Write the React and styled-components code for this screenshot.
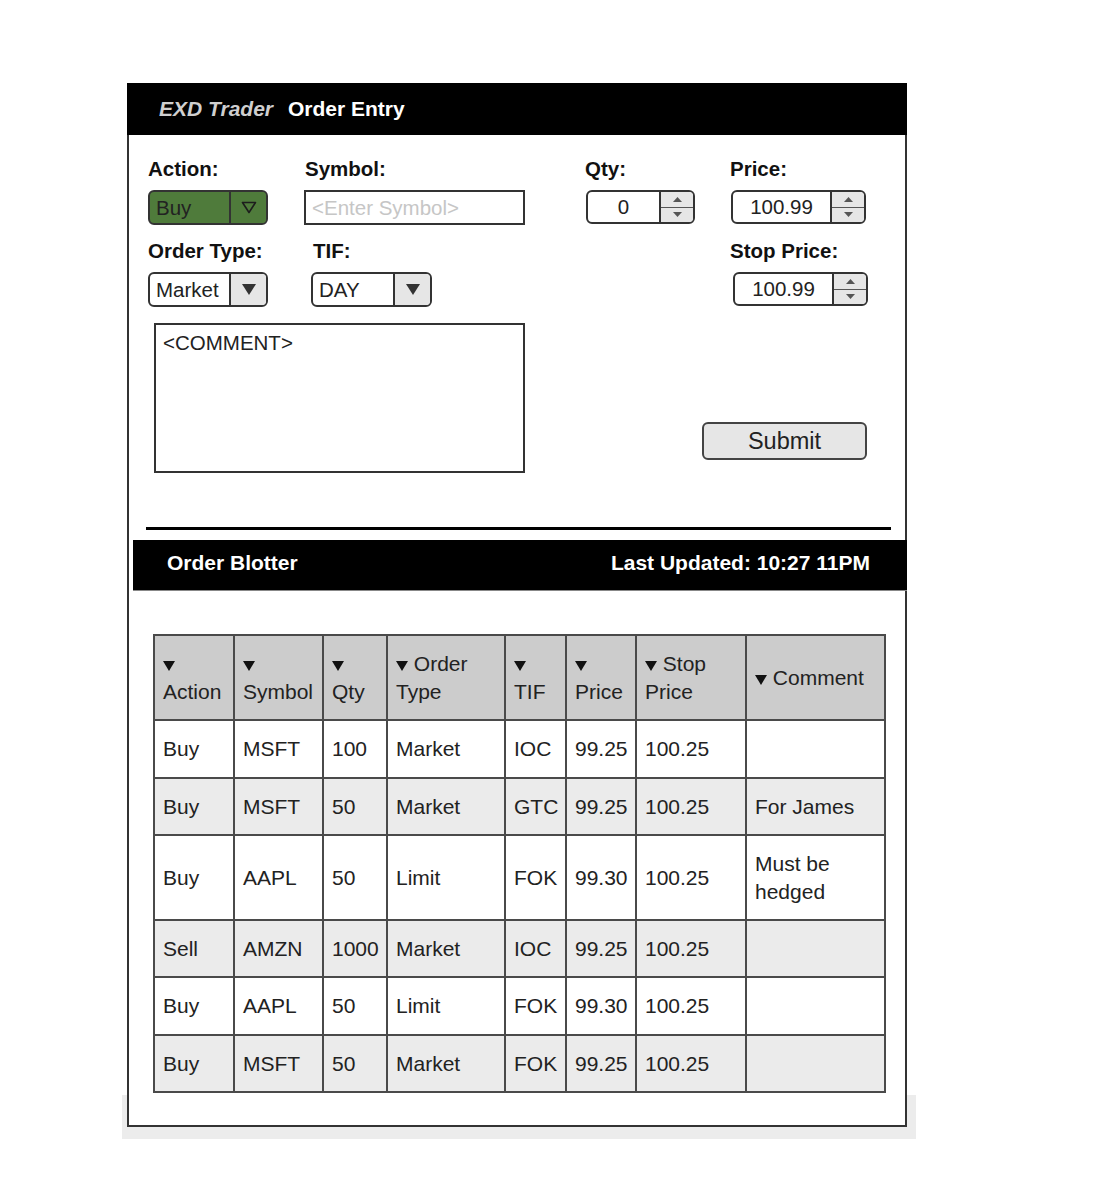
import React from "react";
import styled, { createGlobalStyle } from "styled-components";

const GlobalStyle = createGlobalStyle`
  * { box-sizing: border-box; }
  body {
    margin: 0;
    background: #fff;
    font-family: "Liberation Sans", Arial, sans-serif;
    color: #222;
  }
`;

const orders = [
  { action: "Buy", symbol: "MSFT", qty: "100", type: "Market", tif: "IOC", price: "99.25", stop: "100.25", comment: "" },
  { action: "Buy", symbol: "MSFT", qty: "50", type: "Market", tif: "GTC", price: "99.25", stop: "100.25", comment: "For James" },
  { action: "Buy", symbol: "AAPL", qty: "50", type: "Limit", tif: "FOK", price: "99.30", stop: "100.25", comment: "Must be hedged" },
  { action: "Sell", symbol: "AMZN", qty: "1000", type: "Market", tif: "IOC", price: "99.25", stop: "100.25", comment: "" },
  { action: "Buy", symbol: "AAPL", qty: "50", type: "Limit", tif: "FOK", price: "99.30", stop: "100.25", comment: "" },
  { action: "Buy", symbol: "MSFT", qty: "50", type: "Market", tif: "FOK", price: "99.25", stop: "100.25", comment: "" },
];

const columns = [
  { label: "Action", w: 80 },
  { label: "Symbol", w: 89 },
  { label: "Qty", w: 64 },
  { label: "Order Type", w: 118 },
  { label: "TIF", w: 61 },
  { label: "Price", w: 70 },
  { label: "Stop Price", w: 110 },
  { label: "Comment", w: 139 },
];

const SortArrow = () => (
  <svg width="12" height="10" viewBox="0 0 12 10">
    <path d="M0 0 L12 0 L6 10 Z" fill="#111" />
  </svg>
);

const OutlineArrow = () => (
  <svg width="16" height="13" viewBox="0 0 16 13">
    <path d="M1.5 1.5 L14.5 1.5 L8 11.5 Z" fill="none" stroke="#1d1d1d" strokeWidth="1.6" strokeLinejoin="round" />
  </svg>
);

const SolidArrow = () => (
  <svg width="16" height="13" viewBox="0 0 16 13">
    <path d="M1 1 L15 1 L8 12 Z" fill="#333" />
  </svg>
);

const SpinArrow = ({ up }) => (
  <svg width="9" height="5" viewBox="0 0 9 5">
    <path d={up ? "M0 5 L9 5 L4.5 0 Z" : "M0 0 L9 0 L4.5 5 Z"} fill="#555" />
  </svg>
);

const Select = ({ value, width, green }) => (
  <SelectBox $w={width} $green={green}>
    <SelectText>{value}</SelectText>
    <SelectArrow $green={green}>{green ? <OutlineArrow /> : <SolidArrow />}</SelectArrow>
  </SelectBox>
);

const Spinner = ({ value, width }) => (
  <SpinBox $w={width}>
    <SpinValue>{value}</SpinValue>
    <SpinButtons>
      <SpinBtn $top>
        <SpinArrow up />
      </SpinBtn>
      <SpinBtn>
        <SpinArrow />
      </SpinBtn>
    </SpinButtons>
  </SpinBox>
);

const App = () => {
  return (
    <Page>
      <GlobalStyle />
      <Panel>
        <Header>
          <Brand>EXD Trader</Brand>
          <span>Order Entry</span>
        </Header>

        <Form>
          <LeftCol>
            <FieldRow>
              <Field $w={156}>
                <Label>Action:</Label>
                <Select value="Buy" width={120} green />
              </Field>
              <Field>
                <Label $indent={1}>Symbol:</Label>
                <TextBox>&lt;Enter Symbol&gt;</TextBox>
              </Field>
            </FieldRow>
            <FieldRow $top={14}>
              <Field $w={163}>
                <Label>Order Type:</Label>
                <Select value="Market" width={120} />
              </Field>
              <Field>
                <Label $indent={2}>TIF:</Label>
                <Select value="DAY" width={121} />
              </Field>
            </FieldRow>
            <Comment>&lt;COMMENT&gt;</Comment>
          </LeftCol>

          <QtyCol>
            <Label $indent={-1}>Qty:</Label>
            <Spinner value="0" width={109} />
          </QtyCol>

          <RightCol>
            <Field $pl={28}>
              <Label>Price:</Label>
              <SpinWrap $ml={1}>
                <Spinner value="100.99" width={135} />
              </SpinWrap>
            </Field>
            <Field $pl={28} $top={15}>
              <Label>Stop Price:</Label>
              <SpinWrap $ml={3}>
                <Spinner value="100.99" width={135} />
              </SpinWrap>
            </Field>
            <SubmitButton>Submit</SubmitButton>
          </RightCol>
        </Form>

        <Divider />

        <BlotterBar>
          <span>Order Blotter</span>
          <span>Last Updated: 10:27 11PM</span>
        </BlotterBar>

        <Table>
          <thead>
            <tr>
              {columns.map((c) => (
                <Th key={c.label} $w={c.w}>
                  <SortArrow /> {c.label}
                </Th>
              ))}
            </tr>
          </thead>
          <tbody>
            {orders.map((o, i) => (
              <Tr key={i} $alt={i % 2 === 1}>
                <Td>{o.action}</Td>
                <Td>{o.symbol}</Td>
                <Td>{o.qty}</Td>
                <Td>{o.type}</Td>
                <Td>{o.tif}</Td>
                <Td>{o.price}</Td>
                <Td>{o.stop}</Td>
                <Td>{o.comment}</Td>
              </Tr>
            ))}
          </tbody>
        </Table>
      </Panel>
      <Band />
    </Page>
  );
};

const Page = styled.div`
  padding-top: 83px;
  padding-bottom: 58px;
`;

const Panel = styled.div`
  position: relative;
  z-index: 1;
  margin-left: 127px;
  width: 780px;
  background: #fff;
  border: 2px solid #333;
  border-top: none;
  padding-bottom: 32px;
`;

const Band = styled.div`
  margin-top: -32px;
  margin-left: 122px;
  width: 794px;
  height: 44px;
  background: #ececec;
`;

const Header = styled.div`
  margin: 0 -2px;
  height: 52px;
  background: #000;
  display: flex;
  align-items: center;
  padding-left: 32px;
  font-size: 21px;
  font-weight: 700;
  color: #fff;
`;

const Brand = styled.span`
  font-style: italic;
  color: #cfcfcf;
  margin-right: 15px;
`;

const Form = styled.div`
  display: flex;
  padding: 22px 0 0 19px;
`;

const LeftCol = styled.div`
  width: 377px;
  display: flex;
  flex-direction: column;
`;

const FieldRow = styled.div`
  display: flex;
  margin-top: ${(p) => p.$top || 0}px;
`;

const Field = styled.div`
  display: flex;
  flex-direction: column;
  align-items: flex-start;
  width: ${(p) => (p.$w ? `${p.$w}px` : "auto")};
  padding-left: ${(p) => p.$pl || 0}px;
  margin-top: ${(p) => p.$top || 0}px;
`;

const Label = styled.div`
  font-size: 20.5px;
  font-weight: 700;
  line-height: 24px;
  margin-bottom: 9px;
  margin-left: ${(p) => p.$indent || 0}px;
  color: #111;
`;

const SelectBox = styled.div`
  display: flex;
  width: ${(p) => p.$w}px;
  height: 35px;
  border: 2px solid #333;
  border-radius: 6px;
  overflow: hidden;
  background: ${(p) => (p.$green ? "#4f7b3b" : "#fff")};
`;

const SelectText = styled.div`
  flex: 1;
  padding-left: 6px;
  font-size: 20.5px;
  line-height: 31px;
  color: #222;
`;

const SelectArrow = styled.div`
  width: 37px;
  border-left: 2px solid #333;
  background: ${(p) => (p.$green ? "#4f7b3b" : "#e6e6e6")};
  display: flex;
  align-items: center;
  justify-content: center;
`;

const TextBox = styled.div`
  width: 221px;
  height: 35px;
  border: 2px solid #333;
  padding-left: 6px;
  font-size: 20.5px;
  line-height: 31px;
  color: #c6c6c6;
`;

const Comment = styled.div`
  margin: 16px 0 0 6px;
  width: 371px;
  height: 150px;
  border: 2px solid #333;
  padding: 6px 7px;
  font-size: 20.5px;
  line-height: 24px;
  color: #222;
`;

const QtyCol = styled.div`
  margin-left: 61px;
  width: 109px;
  display: flex;
  flex-direction: column;
  align-items: flex-start;
`;

const RightCol = styled.div`
  margin-left: 7px;
  width: 166px;
  display: flex;
  flex-direction: column;
`;

const SpinWrap = styled.div`
  margin-left: ${(p) => p.$ml || 0}px;
`;

const SpinBox = styled.div`
  display: flex;
  width: ${(p) => p.$w}px;
  height: 34px;
  border: 2px solid #333;
  border-radius: 6px;
  overflow: hidden;
  background: #fff;
`;

const SpinValue = styled.div`
  flex: 1;
  text-align: center;
  font-size: 20.5px;
  line-height: 30px;
  color: #222;
`;

const SpinButtons = styled.div`
  width: 34px;
  border-left: 2px solid #333;
  background: #e6e6e6;
  display: flex;
  flex-direction: column;
`;

const SpinBtn = styled.div`
  flex: 1;
  display: flex;
  align-items: center;
  justify-content: center;
  border-bottom: ${(p) => (p.$top ? "1px solid #555" : "none")};
`;

const SubmitButton = styled.button`
  margin-top: 116px;
  width: 165px;
  height: 38px;
  border: 2px solid #444;
  border-radius: 6px;
  background: #e6e6e6;
  font-family: "Liberation Sans", Arial, sans-serif;
  font-size: 23.5px;
  color: #222;
  padding: 0;
`;

const Divider = styled.div`
  margin: 54px 0 0 17px;
  width: 745px;
  height: 3px;
  background: #000;
`;

const BlotterBar = styled.div`
  margin: 10px -2px 0 4px;
  height: 51px;
  background: #000;
  border-bottom: 1px solid #888;
  display: flex;
  justify-content: space-between;
  align-items: center;
  padding: 0 37px 5px 34px;
  color: #fff;
  font-size: 21px;
  font-weight: 700;
`;

const Table = styled.table`
  margin: 43px 0 0 24px;
  width: 731px;
  border-collapse: collapse;
  table-layout: fixed;
  font-size: 21px;
  line-height: 28px;
  color: #222;
`;

const Th = styled.th`
  width: ${(p) => p.$w}px;
  background: #cccccc;
  border: 2px solid #4a4a4a;
  padding: 14px 8px 13.3px;
  font-weight: 400;
  text-align: left;
  vertical-align: middle;
`;

const Tr = styled.tr`
  background: ${(p) => (p.$alt ? "#ebebeb" : "#fff")};
`;

const Td = styled.td`
  border: 2px solid #4a4a4a;
  padding: 14px 8px 13.3px;
  vertical-align: middle;
`;

export default App;
